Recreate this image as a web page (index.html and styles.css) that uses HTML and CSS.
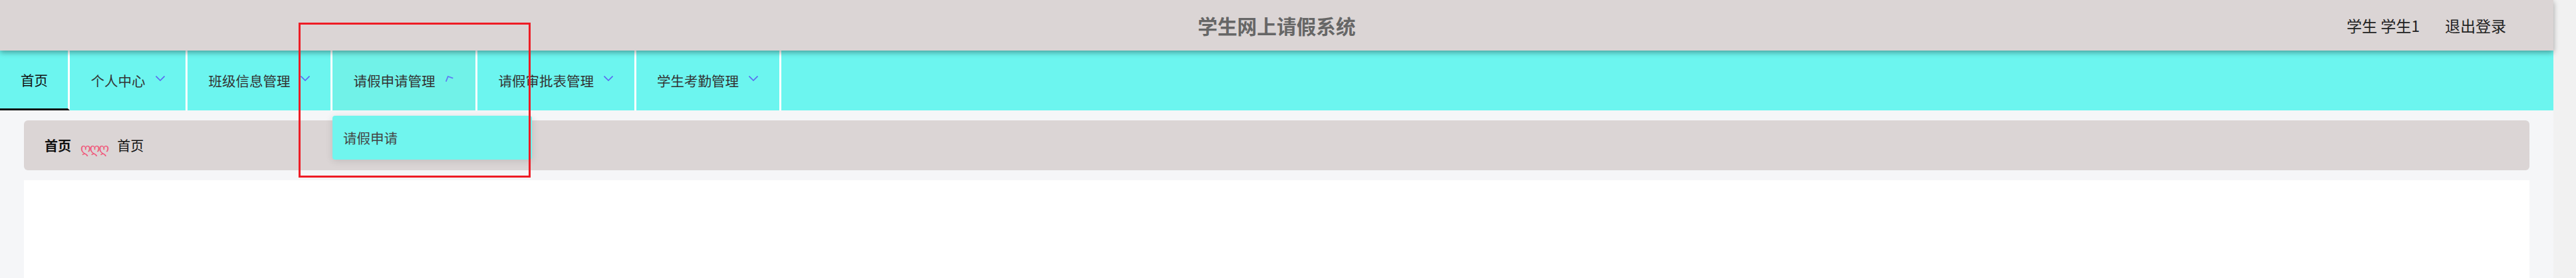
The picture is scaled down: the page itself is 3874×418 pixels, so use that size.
FILE: index.html
```html
<!DOCTYPE html>
<html lang="zh-CN">
<head>
<meta charset="utf-8">
<title>学生网上请假系统</title>
<link rel="stylesheet" href="styles.css">
</head>
<body>
<div class="window">
  <div class="page">
    <header class="topbar">
      <div class="topbar-side"></div>
      <h1 class="title">学生网上请假系统</h1>
      <div class="topbar-side user">
        <span class="user-name">学生 学生1</span>
        <span class="logout">退出登录</span>
      </div>
    </header>
    <nav class="menu">
      <div class="menu-item active">首页</div>
      <div class="menu-item">个人中心<svg class="arrow" viewBox="0 0 14 8"><polyline points="0.5,0.5 7,7 13.5,0.5"/></svg></div>
      <div class="menu-item">班级信息管理<svg class="arrow" viewBox="0 0 14 8"><polyline points="0.5,0.5 7,7 13.5,0.5"/></svg></div>
      <div class="menu-item opened">请假申请管理<svg class="arrow turning" viewBox="0 0 14 10"><polyline points="0.7,8.7 3.7,1 11.3,3.7"/></svg>
        <div class="submenu">
          <div class="submenu-item">请假申请</div>
        </div>
      </div>
      <div class="menu-item">请假审批表管理<svg class="arrow" viewBox="0 0 14 8"><polyline points="0.5,0.5 7,7 13.5,0.5"/></svg></div>
      <div class="menu-item">学生考勤管理<svg class="arrow" viewBox="0 0 14 8"><polyline points="0.5,0.5 7,7 13.5,0.5"/></svg></div>
    </nav>
    <main class="main">
      <div class="crumbs">
        <span class="crumb-home">首页</span>
        <span class="crumb-sep">ღღღ</span>
        <span class="crumb-current">首页</span>
      </div>
      <section class="content"></section>
    </main>
    <div class="highlight"></div>
  </div>
  <div class="scrollbar"></div>
</div>
</body>
</html>
```
FILE: styles.css
```css
* { box-sizing: border-box; }
html, body {
  margin: 0;
  padding: 0;
  height: 100%;
  overflow: hidden;
}
body {
  font-family: "Noto Sans CJK SC", "Noto Sans", sans-serif;
  color: #303133;
  background: #f5f6f8;
}
.window {
  display: flex;
  height: 418px;
}
.page {
  position: relative;
  width: 3840px;
  display: flex;
  flex-direction: column;
  background: #f5f6f8;
}
.scrollbar {
  width: 34px;
  background: #f1f1f1;
}
.topbar {
  position: relative;
  z-index: 2;
  height: 76px;
  background: #dbd5d5;
  display: grid;
  grid-template-columns: 1fr auto 1fr;
  align-items: center;
  box-shadow: 0 3px 8px rgba(0, 0, 0, 0.35);
}
.title {
  margin: 0;
  font-size: 29.7px;
  font-weight: 700;
  color: #666666;
  line-height: 1;
  padding-top: 2px;
}
.user {
  display: flex;
  justify-content: flex-end;
  align-items: center;
  gap: 38px;
  padding-right: 71px;
  font-size: 23px;
  color: #222;
  line-height: 1;
}
.menu {
  position: relative;
  z-index: 1;
  height: 90px;
  background: #6cf5ef;
  display: flex;
}
.menu-item {
  position: relative;
  display: flex;
  align-items: center;
  padding: 0 31.5px;
  height: 90px;
  font-size: 20.5px;
  color: #333;
  border-right: 3px solid #ffffff;
  white-space: nowrap;
}
.menu-item.active {
  color: #111;
  border-bottom: 3px solid #111;
  padding: 1px 30px 0 31px;
}
.menu-item.opened {
  background: #71f2e8;
}
.arrow {
  width: 14px;
  height: 8px;
  margin-left: 15px;
  margin-top: -6px;
  fill: none;
  stroke: #5a68f0;
  stroke-width: 1.6;
}
.arrow.turning {
  height: 10px;
  margin-top: -4px;
  stroke: #5f7cf4;
  stroke-width: 1.8;
}
.submenu {
  position: absolute;
  left: 0;
  top: 98px;
  width: 300px;
  height: 66px;
  background: #70f5ee;
  border-radius: 4px;
  box-shadow: 0 2px 12px rgba(0, 0, 0, 0.12);
  display: flex;
  align-items: center;
  z-index: 5;
}
.submenu-item {
  padding-left: 16px;
  font-size: 20.5px;
  color: #444;
}
.main {
  flex: 1;
  display: flex;
  flex-direction: column;
  gap: 15px;
  padding: 15px 36px 0;
}
.crumbs {
  height: 75px;
  background: #dbd5d5;
  border-radius: 6px;
  display: flex;
  align-items: center;
  padding-left: 31px;
  font-size: 20px;
  color: #111;
}
.crumb-home {
  font-weight: 700;
}
.crumb-sep {
  margin: 8px 14px 0 14px;
  font-family: "DejaVu Sans", sans-serif;
  color: #f0587a;
  font-size: 20px;
  letter-spacing: -2px;
}
.content {
  flex: 1;
  background: #ffffff;
}
.highlight {
  position: absolute;
  left: 449px;
  top: 34px;
  width: 349px;
  height: 233px;
  border: 3px solid #ee1c25;
  z-index: 10;
  pointer-events: none;
}
```
